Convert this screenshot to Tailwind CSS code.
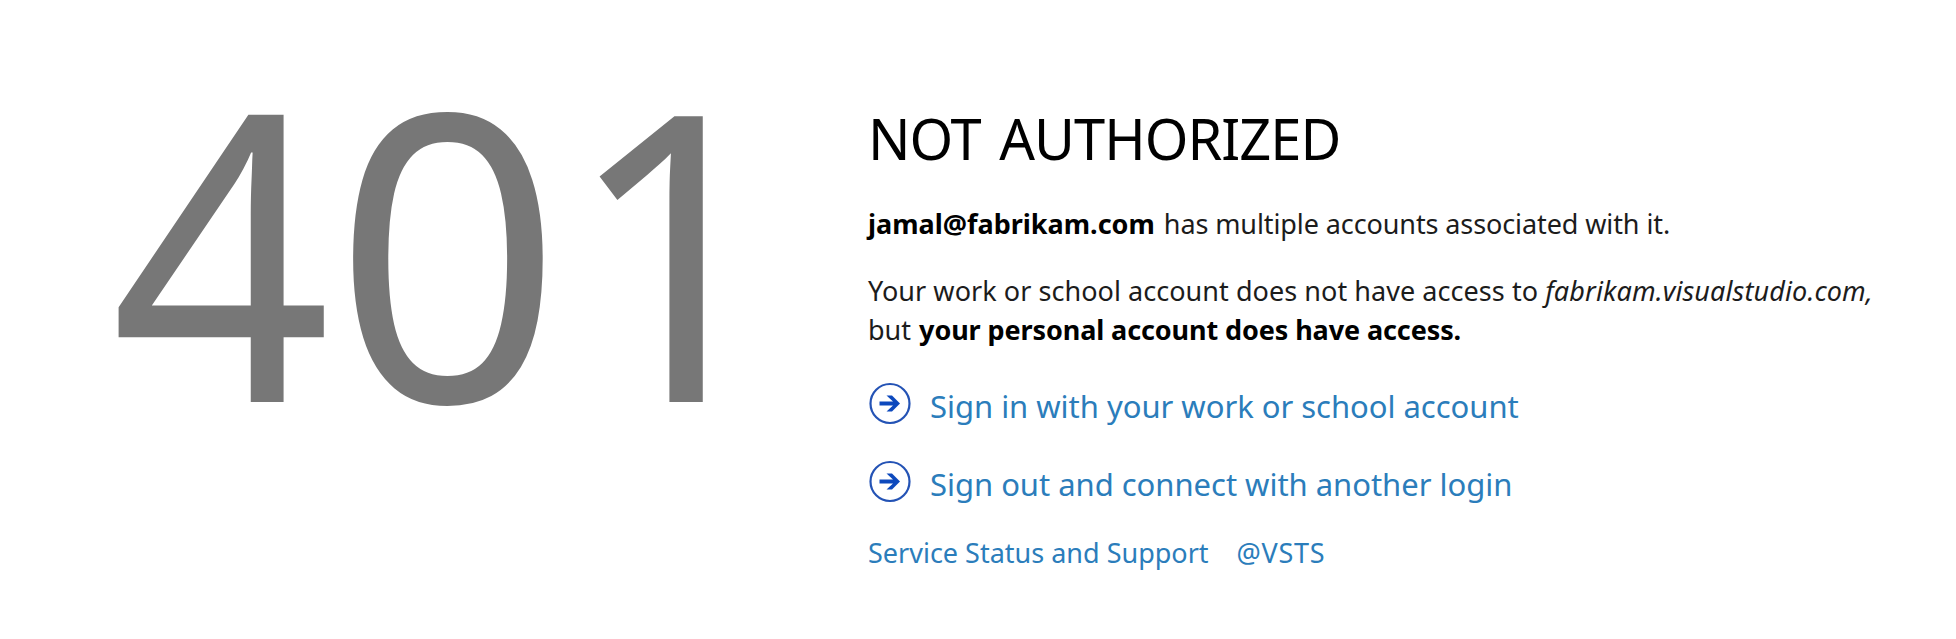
<!DOCTYPE html>
<html lang="en"><head><meta charset="utf-8"><title>401 Not Authorized</title>
<script src="https://cdn.jsdelivr.net/npm/@tailwindcss/browser@4"></script></head>
<body class="bg-white font-['Noto_Sans',sans-serif] text-black">
<main class="flex h-[639px] w-[1956px] overflow-hidden whitespace-nowrap">
<div class="w-[868px] shrink-0 pl-[110px] pt-[60px]"><svg class="block h-[400px] w-[700px] overflow-visible" viewBox="0 0 700 400" fill="#777" font-size="400"><text y="342"><tspan x="0.5" textLength="221" lengthAdjust="spacingAndGlyphs">4</tspan><tspan x="223.5">0</tspan><tspan x="455" textLength="222" lengthAdjust="spacingAndGlyphs">1</tspan></text></svg></div>
<section class="pt-[98px]">
<h1 class="text-[56px] leading-[80px] tracking-[-1px] [word-spacing:5px] font-normal">NOT AUTHORIZED</h1>
<p class="mt-[26px] text-[27px] leading-[39px] text-[#1c1c1c]"><b class="font-bold text-black">jamal@fabrikam.com</b> <span class="ml-[2px] tracking-[-0.1px]">has multiple accounts associated with it.</span></p>
<p class="mt-[28px] text-[27px] leading-[39px] text-[#1c1c1c]"><span class="tracking-[0.05px]">Your work or school account does not have access to </span><i class="tracking-[0.12px]">fabrikam.visualstudio.com,</i><br><span>but</span> <b class="ml-px font-bold tracking-[-0.1px] text-black">your personal account does have access.</b></p>
<a class="mt-[35px] flex h-[44px] items-center text-[31px] leading-[44px] tracking-[-0.03px] text-[#2b7dbb]"><svg class="mr-[18px] h-[44px] w-[44px] shrink-0 overflow-visible" viewBox="0 0 44 44" fill="#0d49bd"><circle cx="22" cy="19.5" r="19.5" fill="none" stroke="#2453b5" stroke-width="2.2"/><path d="M18.5 11.5H24L32 19.5L24 27.5H18.5L25 21.5H11.5V17.5H25Z"/></svg><span>Sign in with your work or school account</span></a>
<a class="mt-[34px] flex h-[44px] items-center text-[31px] leading-[44px] tracking-[-0.03px] text-[#2b7dbb]"><svg class="mr-[18px] h-[44px] w-[44px] shrink-0 overflow-visible" viewBox="0 0 44 44" fill="#0d49bd"><circle cx="22" cy="19.5" r="19.5" fill="none" stroke="#2453b5" stroke-width="2.2"/><path d="M18.5 11.5H24L32 19.5L24 27.5H18.5L25 21.5H11.5V17.5H25Z"/></svg><span>Sign out and connect with another login</span></a>
<p class="mt-[27px] flex gap-[28px] text-[27px] leading-[39px] text-[#2b7dbb]"><span>Service Status and Support</span><span class="tracking-[0.7px]">@VSTS</span></p>
</section></main>
</body></html>
